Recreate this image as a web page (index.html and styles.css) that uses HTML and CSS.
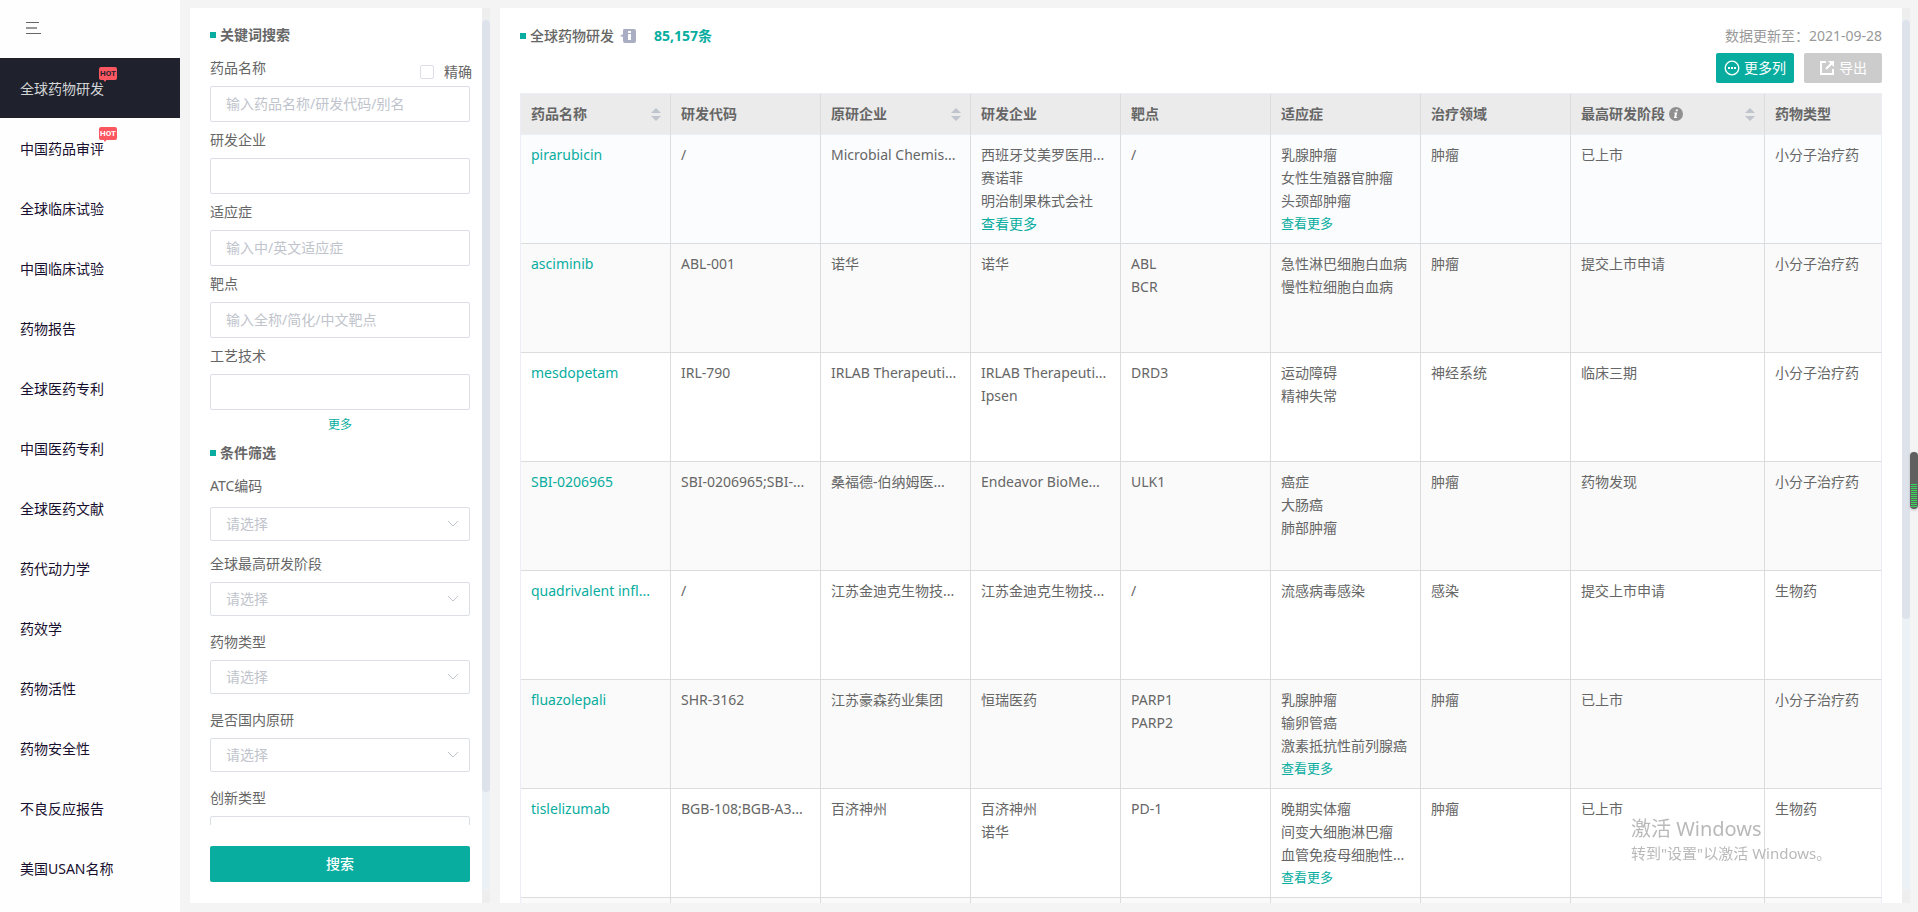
FILE: index.html
```html
<!DOCTYPE html>
<html lang="zh-CN">
<head>
<meta charset="utf-8">
<title>全球药物研发</title>
<link rel="stylesheet" href="styles.css">
</head>
<body>
<div class="app">
  <nav class="sidebar">
    <button class="toggle" type="button" aria-label="折叠菜单">
      <svg width="16" height="12" viewBox="0 0 16 12" fill="#666"><rect width="13" height="1"/><rect y="5" width="11" height="2" fill="#999"/><rect y="11" width="15" height="1"/></svg>
    </button>
    <a class="nav-item active" href="#"><span class="nav-label">全球药物研发<span class="hot">HOT</span></span></a>
    <a class="nav-item" href="#"><span class="nav-label">中国药品审评<span class="hot">HOT</span></span></a>
    <a class="nav-item" href="#">全球临床试验</a>
    <a class="nav-item" href="#">中国临床试验</a>
    <a class="nav-item" href="#">药物报告</a>
    <a class="nav-item" href="#">全球医药专利</a>
    <a class="nav-item" href="#">中国医药专利</a>
    <a class="nav-item" href="#">全球医药文献</a>
    <a class="nav-item" href="#">药代动力学</a>
    <a class="nav-item" href="#">药效学</a>
    <a class="nav-item" href="#">药物活性</a>
    <a class="nav-item" href="#">药物安全性</a>
    <a class="nav-item" href="#">不良反应报告</a>
    <a class="nav-item" href="#">美国USAN名称</a>
  </nav>

  <aside class="panel filter">
    <div class="filter-body">
      <div class="filter-scroll">
        <h2 class="title">关键词搜索</h2>
        <div class="field">
          <div class="field-head">
            <label class="label" for="f-name">药品名称</label>
            <label class="exact"><input class="check" type="checkbox">精确</label>
          </div>
          <input class="control" id="f-name" type="text" placeholder="输入药品名称/研发代码/别名">
        </div>
        <div class="field"><label class="label" for="f-org">研发企业</label><input class="control" id="f-org" type="text"></div>
        <div class="field"><label class="label" for="f-ind">适应症</label><input class="control" id="f-ind" type="text" placeholder="输入中/英文适应症"></div>
        <div class="field"><label class="label" for="f-target">靶点</label><input class="control" id="f-target" type="text" placeholder="输入全称/简化/中文靶点"></div>
        <div class="field"><label class="label" for="f-tech">工艺技术</label><input class="control" id="f-tech" type="text"></div>
        <a class="more" href="#">更多</a>
        <h2 class="title title-second">条件筛选</h2>
        <div class="pick first"><label class="label" for="s-atc">ATC编码</label><div class="select"><select class="control" id="s-atc"><option>请选择</option></select><svg class="chev" viewBox="0 0 12 8"><path d="M1 1l5 5 5-5"/></svg></div></div>
        <div class="pick"><label class="label" for="s-phase">全球最高研发阶段</label><div class="select"><select class="control" id="s-phase"><option>请选择</option></select><svg class="chev" viewBox="0 0 12 8"><path d="M1 1l5 5 5-5"/></svg></div></div>
        <div class="pick"><label class="label" for="s-type">药物类型</label><div class="select"><select class="control" id="s-type"><option>请选择</option></select><svg class="chev" viewBox="0 0 12 8"><path d="M1 1l5 5 5-5"/></svg></div></div>
        <div class="pick"><label class="label" for="s-dom">是否国内原研</label><div class="select"><select class="control" id="s-dom"><option>请选择</option></select><svg class="chev" viewBox="0 0 12 8"><path d="M1 1l5 5 5-5"/></svg></div></div>
        <div class="pick"><label class="label" for="s-new">创新类型</label><div class="select"><select class="control" id="s-new"><option></option></select></div></div>
      </div>
      <button class="search" type="button">搜索</button>
    </div>
    <div class="bar"><div class="thumb thumb-filter"></div></div>
  </aside>

  <main class="panel main">
    <div class="main-body">
      <header class="head">
        <div class="head-left">
          <h1 class="title title-main">全球药物研发</h1>
          <svg class="note" width="16" height="14" viewBox="0 0 16 14"><path fill="#a9aec2" d="M4 0h10a2 2 0 0 1 2 2v10a2 2 0 0 1-2 2H5a2 2 0 0 1-2-2V8L0 7l3-2V2a2 2 0 0 1 1-2z"/><path fill="#fff" d="M8 2h3v2H8zM8 5h3v6H8z"/></svg>
          <strong class="count">85,157条</strong>
        </div>
        <div class="head-right">
          <div class="date">数据更新至：2021-09-28</div>
          <div class="actions">
            <button class="btn" type="button"><svg width="16" height="16" viewBox="0 0 16 16"><circle cx="8" cy="8" r="6.800" fill="none" stroke="#fff" stroke-width="1.300"/><path fill="#fff" d="M4 7h2v2H4zM7 7h2v2H7zM10 7h2v2h-2z"/></svg>更多列</button>
            <button class="btn btn-off" type="button"><svg width="16" height="16" viewBox="0 0 16 16" fill="none" stroke="#fff" stroke-width="2"><path d="M7 2H2v12h12V9M7 9l6-6"/><path d="M9 1h6v6z" fill="#fff" stroke="none"/></svg>导出</button>
          </div>
        </div>
      </header>
      <table class="grid">
        <colgroup><col class="c"><col class="c"><col class="c"><col class="c"><col class="c"><col class="c"><col class="c"><col class="c-wide"><col></colgroup>
        <thead>
          <tr>
            <th><div class="th">药品名称<span class="sort"></span></div></th>
            <th>研发代码</th>
            <th><div class="th">原研企业<span class="sort"></span></div></th>
            <th>研发企业</th><th>靶点</th><th>适应症</th><th>治疗领域</th>
            <th><div class="th"><span class="with-info">最高研发阶段<svg width="14" height="14" viewBox="0 0 14 14"><circle cx="7" cy="7" r="7" fill="#909090"/><path fill="#fff" d="M7 2.500h2L8.600 4.300h-2zM5.300 5.500h3L7.200 10h1l-.2 1H5l1-4.500H5z"/></svg></span><span class="sort"></span></div></th>
            <th>药物类型</th>
          </tr>
        </thead>
        <tbody>
          <tr class="hover">
            <td><a href="#">pirarubicin</a></td><td>/</td><td>Microbial Chemis...</td>
            <td><p>西班牙艾美罗医用...</p><p>赛诺菲</p><p>明治制果株式会社</p><a href="#">查看更多</a></td>
            <td>/</td>
            <td><p>乳腺肿瘤</p><p>女性生殖器官肿瘤</p><p>头颈部肿瘤</p><a class="small" href="#">查看更多</a></td>
            <td>肿瘤</td><td>已上市</td><td>小分子治疗药</td>
          </tr>
          <tr>
            <td><a href="#">asciminib</a></td><td>ABL-001</td><td>诺华</td><td>诺华</td>
            <td><p>ABL</p><p>BCR</p></td><td><p>急性淋巴细胞白血病</p><p>慢性粒细胞白血病</p></td>
            <td>肿瘤</td><td>提交上市申请</td><td>小分子治疗药</td>
          </tr>
          <tr>
            <td><a href="#">mesdopetam</a></td><td>IRL-790</td><td>IRLAB Therapeuti...</td><td><p>IRLAB Therapeuti...</p><p>Ipsen</p></td>
            <td>DRD3</td><td><p>运动障碍</p><p>精神失常</p></td>
            <td>神经系统</td><td>临床三期</td><td>小分子治疗药</td>
          </tr>
          <tr>
            <td><a href="#">SBI-0206965</a></td><td>SBI-0206965;SBI-...</td><td>桑福德-伯纳姆医...</td><td>Endeavor BioMe...</td>
            <td>ULK1</td><td><p>癌症</p><p>大肠癌</p><p>肺部肿瘤</p></td>
            <td>肿瘤</td><td>药物发现</td><td>小分子治疗药</td>
          </tr>
          <tr>
            <td><a href="#">quadrivalent infl...</a></td><td>/</td><td>江苏金迪克生物技...</td><td>江苏金迪克生物技...</td>
            <td>/</td><td>流感病毒感染</td><td>感染</td><td>提交上市申请</td><td>生物药</td>
          </tr>
          <tr>
            <td><a href="#">fluazolepali</a></td><td>SHR-3162</td><td>江苏豪森药业集团</td><td>恒瑞医药</td>
            <td><p>PARP1</p><p>PARP2</p></td><td><p>乳腺肿瘤</p><p>输卵管癌</p><p>激素抵抗性前列腺癌</p><a class="small" href="#">查看更多</a></td>
            <td>肿瘤</td><td>已上市</td><td>小分子治疗药</td>
          </tr>
          <tr>
            <td><a href="#">tislelizumab</a></td><td>BGB-108;BGB-A3...</td><td>百济神州</td><td><p>百济神州</p><p>诺华</p></td>
            <td>PD-1</td><td><p>晚期实体瘤</p><p>间变大细胞淋巴瘤</p><p>血管免疫母细胞性...</p><a class="small" href="#">查看更多</a></td>
            <td>肿瘤</td><td>已上市</td><td>生物药</td>
          </tr>
          <tr><td></td><td></td><td></td><td></td><td></td><td></td><td></td><td></td><td></td></tr>
        </tbody>
      </table>
    </div>
    <div class="bar"><div class="thumb thumb-main"></div></div>
  </main>
</div>
<div class="watermark"><div class="wm-title">激活 Windows</div><div class="wm-text">转到"设置"以激活 Windows。</div></div>
<div class="meter"><div class="meter-level"></div></div>
</body>
</html>
```
FILE: styles.css
```css
* { box-sizing: border-box; }
body {
  margin: 0;
  font: 14px/20px "Noto Sans", "Noto Sans CJK SC", sans-serif;
  color: #666;
  background: #f4f4f4;
}
h1, h2, p { margin: 0; font-size: 14px; }
a { color: #08ad9f; text-decoration: none; }
button, input, select { font: inherit; }
.app { display: flex; height: 100vh; overflow: hidden; }

.sidebar { flex: 0 0 180px; margin-right: 10px; background: #fefefe; overflow: hidden; }
.toggle { display: flex; align-items: center; width: 100%; height: 58px; padding: 0 26px 2px; border: 0; background: none; }
.nav-item { display: flex; align-items: center; height: 60px; padding: 2px 20px 0; color: #170f2e; }
.nav-item.active { background: #1f222d; color: #d3d4d6; }
.nav-label { position: relative; }
.hot {
  position: absolute; left: 79px; top: -12px; width: 18px; height: 13px;
  border-radius: 2px; background: #fc5661; color: #fff;
  font: 700 8px/13px Roboto, sans-serif; text-align: center;
}
.hot::after { content: ""; position: absolute; left: 4px; top: 12px; border: solid transparent; border-width: 0 2px; border-top: 3px solid #fc5661; }
.active .hot { color: #1f222d; }

.panel { display: flex; margin: 8px 0 9px; background: #fff; overflow: hidden; }
.bar { flex: 0 0 8px; padding: 12px 0; background: linear-gradient(#eee 12px, #ecf1f5 12px, #ecf1f5 calc(100% - 12px), #eee calc(100% - 12px)); }
.thumb { border-radius: 4px; background: #dee2ea; }
.thumb-filter { height: 88.6%; }
.thumb-main { height: 68.8%; }

.filter { flex: 0 0 300px; margin-right: 10px; }
.filter-body { flex: 1; display: flex; flex-direction: column; padding: 0 10px 21px 20px; min-width: 0; }
.filter-scroll { flex: 1; min-height: 0; overflow: hidden; padding-top: 17px; }
.title { display: flex; align-items: center; gap: 4px; line-height: 20px; }
.title::before { content: ""; width: 6px; height: 6px; background: #08ad9f; }
.field { padding-top: 8px; }
.title + .field { padding-top: 13px; }
.label { display: block; height: 28px; line-height: 20px; }
.field-head { display: flex; justify-content: space-between; }
.exact { display: flex; align-items: center; gap: 10px; height: 28px; }
.check { appearance: none; width: 14px; height: 14px; margin: 0; border: 1px solid #dcdfe6; border-radius: 2px; background: #fff; }
.control {
  display: block; width: 260px; height: 36px; padding: 0 15px 2px;
  border: 1px solid #dcdfe6; border-radius: 2px; background: #fff; color: #c0c4cc; outline: 0;
}
.control::placeholder { color: #c0c4cc; opacity: 1; }
.more { display: block; width: 260px; padding-top: 6px; font-size: 12px; line-height: 18px; text-align: center; }
.title-second { margin-top: 9px; }
.pick { padding-top: 16px; }
.pick.first, .first + .pick { padding-top: 13px; }
.first .label { height: 31px; }
.select { position: relative; width: 260px; }
.select .control { height: 34px; padding-bottom: 0; appearance: none; }
.chev { position: absolute; right: 11px; top: 13px; width: 12px; height: 8px; fill: none; stroke: #c0c4cc; stroke-width: 1; }
.search { width: 260px; height: 36px; margin-top: 21px; flex: none; border: 0; border-radius: 2px; background: #08ad9f; color: #fff; font-weight: 500; }

.main { flex: 1; min-width: 0; margin-right: 8px; }
.main-body { flex: 1; min-width: 0; padding: 18px 20px 0; }
.head { display: flex; justify-content: space-between; height: 67px; }
.head-left { display: flex; align-items: center; height: 20px; }
.title-main { font-weight: 500; }
.note { margin: 0 18px 0 6px; }
.count { color: #08ad9f; }
.date { color: #999; text-align: right; line-height: 20px; }
.actions { display: flex; justify-content: flex-end; gap: 10px; padding-top: 7px; }
.btn { display: flex; align-items: center; justify-content: center; gap: 4px; width: 78px; height: 30px; padding: 0; border: 0; border-radius: 2px; background: #08ad9f; color: #fff; white-space: nowrap; }
.btn-off { background: #ccc; }

.grid { width: 100%; table-layout: fixed; border-spacing: 0; border: solid #ebeef5; border-width: 1px 0 0 1px; }
.c { width: 150px; }
.c-wide { width: 194px; }
.grid th { height: 41px; padding: 0 10px; border-right: 1px solid #dcdcdc; border-bottom: 1px solid #ebeef5; background: #ebebeb; text-align: left; }
.grid td { height: 109px; padding: 8px 9px 0 10px; border-right: 1px solid #dcdcdc; border-bottom: 1px solid #dcdcdc; line-height: 23px; vertical-align: top; white-space: nowrap; overflow: hidden; }
.grid th:last-child, .grid td:last-child { border-right-color: #ebeef5; }
.grid tr:nth-child(even) td { background: #fafafa; }
.grid .hover td { background: #fbfcfe; }
.small { display: block; font-size: 13px; }
.th, .with-info { display: flex; align-items: center; justify-content: space-between; gap: 4px; }
.sort { display: flex; flex-direction: column; gap: 3px; margin-right: -1px; }
.sort::before, .sort::after { content: ""; border: 5px solid transparent; }
.sort::before { border-top: 0; border-bottom-color: #c0c4cc; }
.sort::after { border-bottom: 0; border-top-color: #c0c4cc; }

.watermark { position: fixed; right: 87px; bottom: 49px; width: 200px; color: #b9b9b9; white-space: nowrap; }
.wm-title { font-size: 20px; line-height: 28px; }
.wm-text { font-size: 15px; line-height: 20px; }
.meter { position: fixed; right: 0; top: 452px; width: 8px; height: 57px; padding: 32px 1px 2px; border-radius: 4px; background: #606060; box-shadow: 0 1px 3px #bbb; }
.meter-level { height: 23px; background: repeating-linear-gradient(#36d95a 0 1px, #606060 1px 2px); }
```
